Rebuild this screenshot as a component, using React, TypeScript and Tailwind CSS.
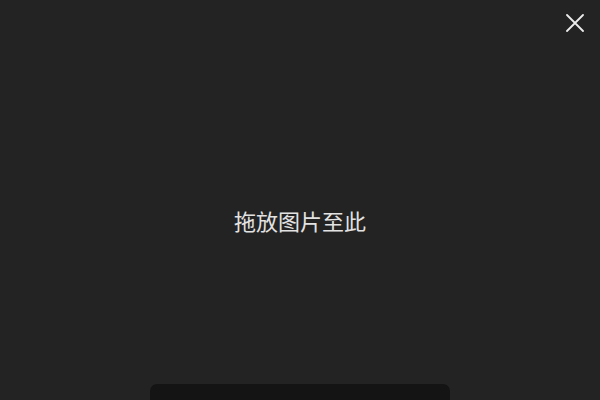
export default function App() {
  return (
    <div
      className="relative flex h-[400px] w-[600px] flex-col items-center overflow-hidden bg-[#232323]"
      style={{ fontFamily: '"Noto Sans CJK SC", "Noto Sans", sans-serif' }}
    >
      {/* Close button */}
      <button className="absolute right-[16px] top-[14px] text-[#ececec]">
        <svg width="18" height="18" viewBox="0 0 18 18" fill="none" stroke="currentColor" strokeWidth="1.8" strokeLinecap="round">
          <path d="M1 1L17 17M17 1L1 17" />
        </svg>
      </button>

      {/* Drop hint */}
      <div className="flex flex-1 items-center justify-center pt-[56px]">
        <span className="text-[22px] leading-none text-[#e2e2e2]">拖放图片至此</span>
      </div>

      {/* Bottom toolbar */}
      <div className="h-[16px] w-[300px] shrink-0 rounded-t-[7px] bg-[#141414]" />
    </div>
  );
}
